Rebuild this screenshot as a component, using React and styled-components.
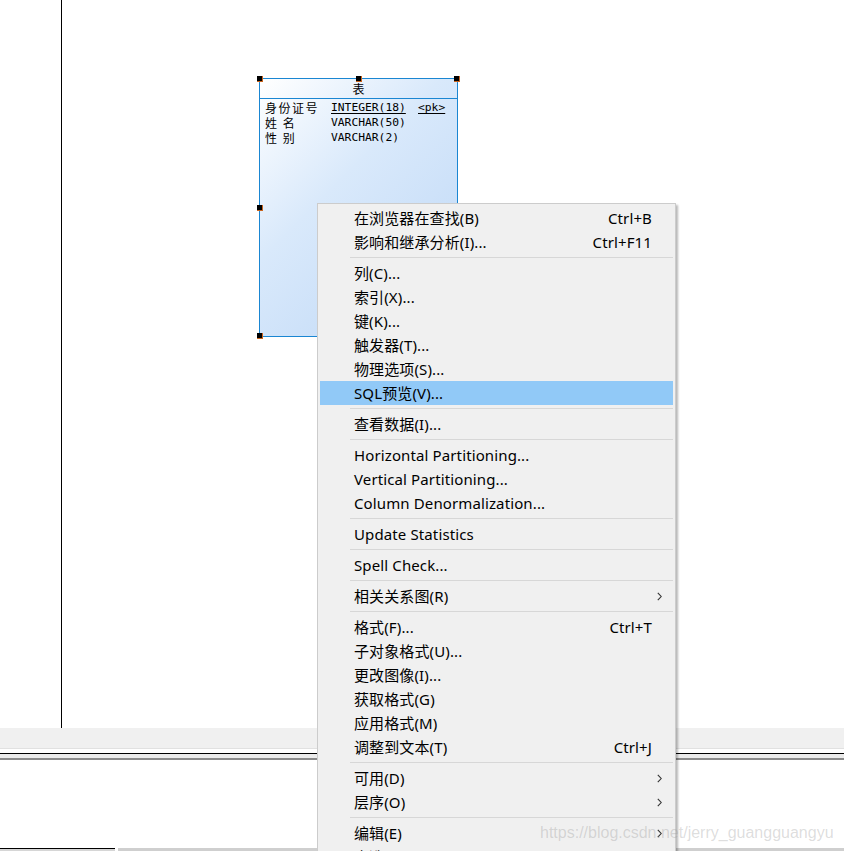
import React from "react";
import styled, { createGlobalStyle } from "styled-components";

const GlobalStyle = createGlobalStyle`
  html, body {
    margin: 0;
    padding: 0;
    background: #ffffff;
  }
  body {
    font-family: "Noto Sans", "Noto Sans CJK SC", sans-serif;
  }
`;

const columns = [
  { name: "身份证号", type: "INTEGER(18)", pk: "<pk>" },
  { name: "姓 名", type: "VARCHAR(50)" },
  { name: "性 别", type: "VARCHAR(2)" },
];

const menuItems = [
  { label: "在浏览器在查找(B)", shortcut: "Ctrl+B" },
  { label: "影响和继承分析(I)...", shortcut: "Ctrl+F11" },
  "sep",
  { label: "列(C)..." },
  { label: "索引(X)..." },
  { label: "键(K)..." },
  { label: "触发器(T)..." },
  { label: "物理选项(S)..." },
  { label: "SQL预览(V)...", active: true },
  "sep",
  { label: "查看数据(I)..." },
  "sep",
  { label: "Horizontal Partitioning..." },
  { label: "Vertical Partitioning..." },
  { label: "Column Denormalization..." },
  "sep",
  { label: "Update Statistics" },
  "sep",
  { label: "Spell Check..." },
  "sep",
  { label: "相关关系图(R)", submenu: true },
  "sep",
  { label: "格式(F)...", shortcut: "Ctrl+T" },
  { label: "子对象格式(U)..." },
  { label: "更改图像(I)..." },
  { label: "获取格式(G)" },
  { label: "应用格式(M)" },
  { label: "调整到文本(T)", shortcut: "Ctrl+J" },
  "sep",
  { label: "可用(D)", submenu: true },
  { label: "层序(O)", submenu: true },
  "sep",
  { label: "编辑(E)", submenu: true },
  { label: "全选(A)" },
];

// handle positions in percent of the entity box
const handles = [
  { x: 0, y: 0 },
  { x: 50, y: 0 },
  { x: 100, y: 0 },
  { x: 0, y: 50 },
  { x: 100, y: 50 },
  { x: 0, y: 100 },
  { x: 50, y: 100 },
  { x: 100, y: 100 },
];

const Chevron = () => (
  <svg width="5" height="9" viewBox="0 0 5 9">
    <path d="M0.8 0.8 L4.2 4.5 L0.8 8.2" fill="none" stroke="#333" strokeWidth="1.1" />
  </svg>
);

const App = () => {
  return (
    <Screen>
      <GlobalStyle />
      <Canvas>
        <Margin />
        <Sheet>
          <Entity>
            <EntityTitle>表</EntityTitle>
            <EntityBody>
              {columns.map((col) => (
                <ColumnRow key={col.type} $underline={!!col.pk}>
                  <ColName>{col.name}</ColName>
                  <ColType>{col.type}</ColType>
                  <ColType>{col.pk || ""}</ColType>
                </ColumnRow>
              ))}
            </EntityBody>
            {handles.map((h, i) => (
              <Handle key={i} style={{ left: `${h.x}%`, top: `${h.y}%` }} />
            ))}
          </Entity>
        </Sheet>
      </Canvas>
      <ToolBand />
      <Splitter />
      <OutputPanel />
      <StatusStrip>
        <StatusTab />
        <StatusRest />
      </StatusStrip>

      <Menu>
        {menuItems.map((item, i) =>
          item === "sep" ? (
            <Separator key={i} />
          ) : (
            <MenuItem key={i} $active={item.active}>
              <ItemLabel>{item.label}</ItemLabel>
              <Shortcut>{item.shortcut || ""}</Shortcut>
              <Arrow>{item.submenu ? <Chevron /> : null}</Arrow>
            </MenuItem>
          )
        )}
      </Menu>

      <Watermark>https://blog.csdn.net/jerry_guangguangyu</Watermark>
    </Screen>
  );
};

const Screen = styled.div`
  position: relative;
  width: 844px;
  height: 851px;
  overflow: hidden;
  display: flex;
  flex-direction: column;
  background: #ffffff;
`;

const Canvas = styled.div`
  display: flex;
  height: 728px;
  background: #ffffff;
`;

const Margin = styled.div`
  width: 61px;
  flex-shrink: 0;
  border-right: 1.3px solid #000000;
`;

const Sheet = styled.div`
  position: relative;
  flex: 1;
`;

const Entity = styled.div`
  position: absolute;
  left: 197px;
  top: 78px;
  width: 197px;
  height: 257px;
  border: 1px solid #1a86d2;
  background: linear-gradient(135deg, #ffffff 0%, #d9e9fb 40%, #bdd7f6 100%);
  font-family: "DejaVu Sans Mono", "Noto Sans CJK SC", monospace;
  color: #000000;
`;

const EntityTitle = styled.div`
  height: 19px;
  line-height: 19px;
  text-align: center;
  font-size: 12px;
  font-family: "Noto Sans CJK SC", sans-serif;
  border-bottom: 1px solid #1a86d2;
`;

const EntityBody = styled.div`
  display: flex;
  flex-direction: column;
  padding: 1px 0 0 5px;
`;

const ColumnRow = styled.div`
  display: grid;
  grid-template-columns: 66px 87px auto;
  height: 15px;
  line-height: 15px;
  font-size: 11.3px;
  overflow: hidden;

  span {
    text-decoration: ${(p) => (p.$underline ? "underline" : "none")};
    text-underline-offset: 2px;
  }
`;

const ColName = styled.span`
  font-family: "Noto Sans CJK SC", sans-serif;
  font-size: 12px;
  line-height: 15px;
  letter-spacing: 1.5px;
  white-space: pre;
`;

const ColType = styled.span`
  line-height: 15px;
  white-space: pre;
`;

const Handle = styled.div`
  position: absolute;
  width: 6px;
  height: 6px;
  margin: -3px 0 0 -3px;
  background: #000000;
  box-shadow: inset -1px -1px 0 #c8641e;
`;

const ToolBand = styled.div`
  height: 20px;
  background: #f0f0f0;
`;

const Splitter = styled.div`
  height: 12px;
  background: linear-gradient(
    to bottom,
    #e1e1e1 0 1px,
    #ffffff 1px 5px,
    #000000 5px 6px,
    #ececec 6px 10px,
    #8c8c8c 10px 12px
  );
`;

const OutputPanel = styled.div`
  height: 88px;
  background: #ffffff;
`;

const StatusStrip = styled.div`
  display: flex;
  height: 3px;
`;

const StatusTab = styled.div`
  width: 115px;
  border-top: 1px solid #000000;
  background: #d6d6d6;
`;

const StatusRest = styled.div`
  flex: 1;
  background: #cfcfcf;
  border-left: 3px solid #ffffff;
`;

const Menu = styled.div`
  position: absolute;
  left: 317px;
  top: 203px;
  width: 353px;
  padding: 2px;
  border: 1px solid #cccccc;
  background: #f0f0f0;
  box-shadow: 2px 2px 2px rgba(0, 0, 0, 0.28);
  display: flex;
  flex-direction: column;
  font-family: "Noto Sans", "Noto Sans CJK SC", sans-serif;
  font-size: 15px;
  letter-spacing: 0.12px;
  color: #000000;
`;

const MenuItem = styled.div`
  display: grid;
  grid-template-columns: 1fr auto 21px;
  align-items: center;
  height: 24px;
  padding-left: 34px;
  background: ${(p) => (p.$active ? "#91c9f7" : "transparent")};
  white-space: nowrap;
`;

const ItemLabel = styled.span`
  line-height: 24px;
`;

const Shortcut = styled.span`
  line-height: 24px;
  text-align: right;
`;

const Arrow = styled.span`
  display: flex;
  justify-content: flex-end;
  padding-right: 11px;
`;

const Separator = styled.div`
  height: 7px;
  margin-left: 30px;
  background: linear-gradient(
    to bottom,
    transparent 0 3px,
    #d7d7d7 3px 4px,
    transparent 4px
  );
`;

const Watermark = styled.div`
  position: absolute;
  left: 540px;
  top: 823px;
  font-family: "Liberation Sans", sans-serif;
  font-size: 16px;
  line-height: 20px;
  color: rgba(150, 150, 150, 0.32);
  white-space: nowrap;
  pointer-events: none;
`;

export default App;
